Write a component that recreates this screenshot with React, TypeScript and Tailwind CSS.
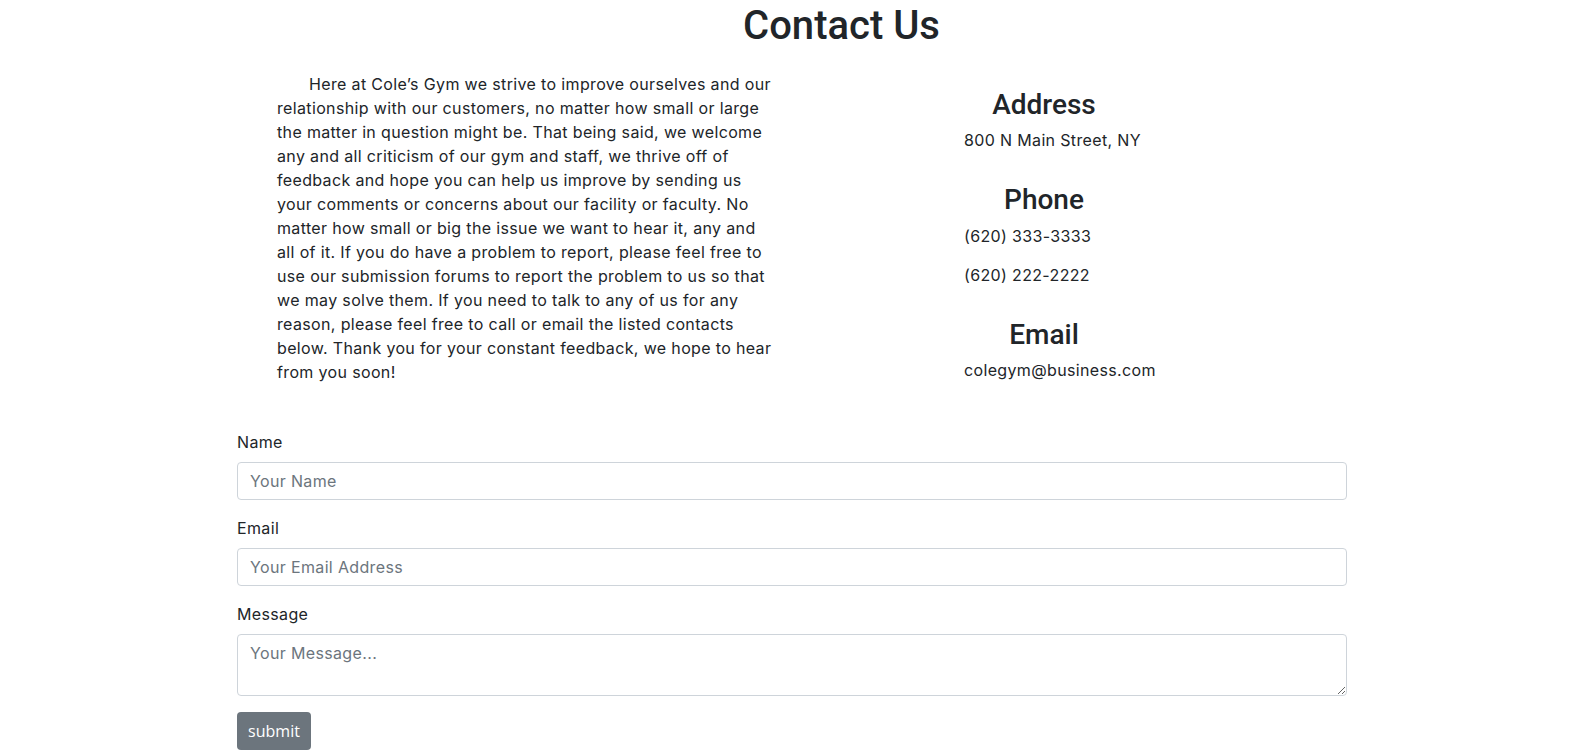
const body = "font-['Inter','Liberation_Sans',sans-serif] tracking-[0.35px]";
const heading = "font-['Roboto','Liberation_Sans',sans-serif] font-medium text-[#212529] tracking-normal";

const paragraphLines = [
  "Here at Cole\u2019s Gym we strive to improve ourselves and our",
  "relationship with our customers, no matter how small or large",
  "the matter in question might be. That being said, we welcome",
  "any and all criticism of our gym and staff, we thrive off of",
  "feedback and hope you can help us improve by sending us",
  "your comments or concerns about our facility or faculty. No",
  "matter how small or big the issue we want to hear it, any and",
  "all of it. If you do have a problem to report, please feel free to",
  "use our submission forums to report the problem to us so that",
  "we may solve them. If you need to talk to any of us for any",
  "reason, please feel free to call or email the listed contacts",
  "below. Thank you for your constant feedback, we hope to hear",
  "from you soon!",
];

const inputClass =
  "block w-full h-[38px] px-3 rounded border border-[#ced4da] bg-white text-base text-[#495057] placeholder:text-[#6c757d] outline-none";

export default function App() {
  return (
    <div className={`${body} min-h-[754px] bg-white text-[#212529] text-base leading-6`}>
      {/* Title */}
      <h1 className={`${heading} pt-[2px] pl-[104px] text-center text-[40px] leading-[48px]`}>
        Contact Us
      </h1>

      <div className="flex pt-[22px]">
        {/* Intro paragraph */}
        <p className="ml-[277px] w-[560px] shrink-0">
          {paragraphLines.map((line, i) => (
            <span key={i} className={`block whitespace-nowrap ${i === 0 ? "pl-[32px]" : ""}`}>
              {line}
            </span>
          ))}
        </p>

        {/* Contact details */}
        <div className="ml-[127px] mt-[16px] w-[160px]">
          <h3 className={`${heading} text-center text-[28px] leading-[34px] mb-[6px]`}>Address</h3>
          <p className="whitespace-nowrap">800 N Main Street, NY</p>

          <h3 className={`${heading} mt-[31px] text-center text-[28px] leading-[34px] mb-[7px]`}>Phone</h3>
          <p className="whitespace-nowrap mb-[15px]">(620) 333-3333</p>
          <p className="whitespace-nowrap">(620) 222-2222</p>

          <h3 className={`${heading} mt-[31px] text-center text-[28px] leading-[34px] mb-[6px]`}>Email</h3>
          <p className="whitespace-nowrap">colegym@business.com</p>
        </div>
      </div>

      {/* Form */}
      <form className="ml-[237px] mt-[46px] w-[1110px]" onSubmit={(e) => e.preventDefault()}>
        <div className="mb-4">
          <label className="block mb-2">Name</label>
          <input type="text" placeholder="Your Name" className={inputClass} />
        </div>
        <div className="mb-4">
          <label className="block mb-2">Email</label>
          <input type="email" placeholder="Your Email Address" className={inputClass} />
        </div>
        <div className="mb-4">
          <label className="block mb-2">Message</label>
          <textarea
            rows={2}
            placeholder="Your Message..."
            className="block w-full h-[62px] px-3 py-[6px] rounded border border-[#ced4da] bg-white text-base leading-6 text-[#495057] placeholder:text-[#6c757d] outline-none"
          />
        </div>
        <button
          type="submit"
          className="h-[38px] w-[74px] rounded bg-[#6c757d] text-white text-base tracking-normal font-['Open_Sans','Liberation_Sans',sans-serif]"
        >
          submit
        </button>
      </form>
    </div>
  );
}
